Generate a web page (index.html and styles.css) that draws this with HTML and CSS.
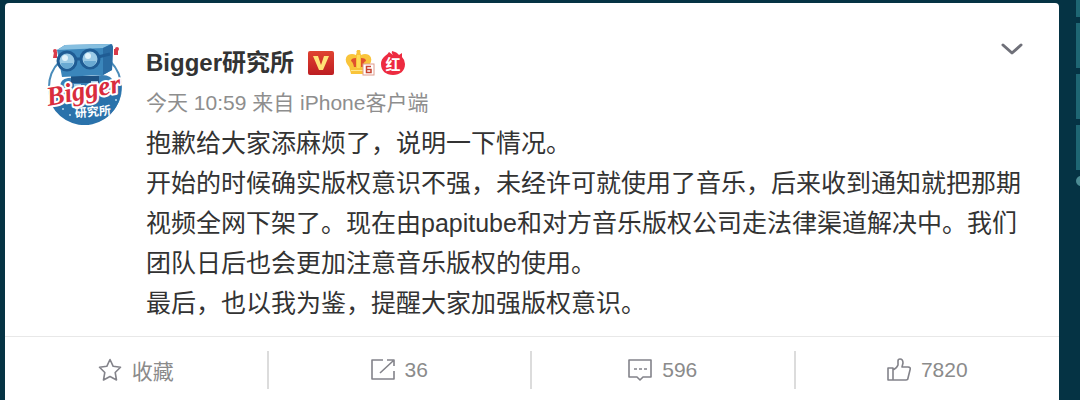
FILE: index.html
```html
<!DOCTYPE html>
<html lang="zh-CN">
<head>
<meta charset="utf-8">
<meta name="viewport" content="width=device-width, initial-scale=1">
<title>Bigger研究所</title>
<link rel="stylesheet" href="styles.css">
</head>
<body class="page">
<article class="card">
  <div class="post">
    <a class="avatar" href="#" aria-label="Bigger研究所">
      <svg class="avatar-art" viewBox="0 0 80 82" aria-hidden="true">
        <circle cx="40" cy="44" r="36" fill="#fff" stroke="#4a8cba" stroke-width="2"/>
        <path d="M4 56L76 40A37 37 0 0 1 4 56Z" fill="#2a72ab"/>
        <path d="M15 44q0-8 8-9l34-3q10 0 12 8l-4 6-48 8Z" fill="#3a80b5"/>
        <path d="M26 33h28v7H26Z" fill="#1d5283"/>
        <path d="M29 41h7v7h-7ZM46 38h7v7h-7Z" fill="#a9d2ea"/>
        <path d="M12 7L20 2 66 1 68 4 67 27 58 32 17 34Z" fill="#3b86bb"/>
        <path d="M12 7L20 2 66 1 58 5Z" fill="#86bfe0"/>
        <path d="M58 5l9-4 1 3-1 23-9 5Z" fill="#2a6ca3"/>
        <path d="M9 9h3v6H8ZM69 6h4v6h-4Z" fill="#d93b4a"/>
        <circle cx="10" cy="8" r="2" fill="#d93b4a"/><circle cx="72" cy="6" r="2" fill="#d93b4a"/>
        <circle cx="22" cy="18" r="9" fill="#9ccbe6" stroke="#1f5c94" stroke-width="3"/>
        <circle cx="45" cy="16" r="9" fill="#9ccbe6" stroke="#1f5c94" stroke-width="3"/>
        <path d="M16 20a6 6 0 0 0 12 0ZM39 18a6 6 0 0 0 12 0Z" fill="#69a9d2"/>
        <circle cx="20" cy="15" r="3" fill="#e2f3fb"/><circle cx="43" cy="13" r="3" fill="#e2f3fb"/>
        <path d="M31 16h5M53 14l12-3" stroke="#1f5c94" stroke-width="3"/>
        <g transform="rotate(-11 39 50)">
          <text class="logo-script" x="39" y="56" text-anchor="middle">Bigger</text>
        </g>
        <g transform="rotate(-5 48 70)">
          <text class="logo-name" x="48" y="73" text-anchor="middle">研究所</text>
        </g>
        <g fill="#b7d9ed"><circle cx="18" cy="66" r="1"/><circle cx="25" cy="72" r="1"/><circle cx="71" cy="57" r="1"/></g>
      </svg>
    </a>
    <div class="content">
      <header class="author">
        <h1 class="name">Bigger研究所</h1>
        <svg class="badge badge-v" viewBox="0 0 26 24" role="img" aria-label="V">
          <defs><linearGradient id="vr" x1="0" y1="0" x2="0" y2="1"><stop offset="0" stop-color="#e04331"/><stop offset="1" stop-color="#bd1d22"/></linearGradient></defs>
          <rect width="26" height="24" rx="2" fill="url(#vr)"/>
          <path d="M5 5h5l3 9 3-9h5l-6 14h-4Z" fill="#ffe277"/>
        </svg>
        <svg class="badge badge-crown" viewBox="0 0 30 26" role="img" aria-label="6">
          <path d="M5 20Q5 17 2 14-1 8 3 5q4-2 8 0 0-2 1-2a2 2 0 1 1 3 0q1 0 1 2 4-2 8 0 4 3 1 9-3 3-3 6l-1 4H6Z" fill="#f9c43a"/>
          <path d="M11 8v9H9Q8 12 6 11 6 8 11 8ZM16 8v9h2q0-5 3-6 0-3-5-3Z" fill="#e0522e"/>
          <path d="M12 5h3v13h-3Z" fill="#ffdc55"/>
          <path d="M6 20h15v1H6Z" fill="#ffe890"/>
          <rect x="18" y="14" width="11" height="11" fill="#fff" stroke="#df9c8c"/>
          <path d="M26 16.500h-4.500v6h4.500v-3h-4" fill="none" stroke="#c84331" stroke-width="1.500"/>
        </svg>
        <svg class="badge badge-red" viewBox="0 0 24 26" role="img" aria-label="红">
          <path d="M11 1q-1 2 1 4L8 2Q7 4 4 6 0 9 0 14C0 21 5 25 12 25s12-4 12-11q0-4-3-7V3l-3 2q-2-3-7-4Z" fill="#ed2b40"/>
          <text class="red-label" x="12" y="20" text-anchor="middle">红</text>
        </svg>
      </header>
      <p class="meta">今天 10:59 来自 iPhone客户端</p>
      <div class="text">
        <p>抱歉给大家添麻烦了，说明一下情况。</p>
        <p>开始的时候确实版权意识不强，未经许可就使用了音乐，后来收到通知就把那期视频全网下架了。现在由papitube和对方音乐版权公司走法律渠道解决中。我们团队日后也会更加注意音乐版权的使用。</p>
        <p>最后，也以我为鉴，提醒大家加强版权意识。</p>
      </div>
    </div>
    <button class="more" type="button" aria-label="更多">
      <svg class="chevron" viewBox="0 0 22 12" aria-hidden="true"><path d="M2 2l9 8 9-8" fill="none" stroke="#6f7079" stroke-width="3" stroke-linecap="round" stroke-linejoin="round"/></svg>
    </button>
  </div>
  <footer class="actions">
    <button class="action" type="button">
      <svg class="icon" viewBox="0 0 24 24" stroke-width="1.600" aria-hidden="true"><path d="M12 1.500l3.200 6.800 7.300 1-5.300 5.200 1.300 7.500-6.500-3.500L5.500 22l1.300-7.500L1.500 9.300l7.300-1Z"/></svg>
      收藏
    </button>
    <button class="action" type="button">
      <svg class="icon" viewBox="0 0 24 24" stroke-width="1.600" aria-hidden="true"><path d="M12 2H1v19h22v-8M9 15L22 3M16 2h7v6"/></svg>
      36
    </button>
    <button class="action" type="button">
      <svg class="icon" viewBox="0 0 24 24" stroke-width="1.600" aria-hidden="true"><path d="M1 2h22v17h-8l-3 3-3-3H1ZM6 11h3M11 11h3M16 11h3"/></svg>
      596
    </button>
    <button class="action" type="button">
      <svg class="icon" viewBox="0 0 24 24" stroke-width="1.600" aria-hidden="true"><path d="M1 10h5v12H1ZM6 12q4-2 5-5V3q0-2 2-2 3 0 3 4l-1 4h6q3 0 2 3l-2 8q0 2-2 2H6"/></svg>
      7820
    </button>
  </footer>
</article>
<div class="rail" aria-hidden="true">
  <span class="block block-first"></span><span class="block"></span><span class="block"></span><span class="block"></span><span class="dot"></span>
</div>
</body>
</html>
```
FILE: styles.css
```css
* { box-sizing: border-box; }

.page {
  margin: 0;
  min-height: 100vh;
  display: flex;
  gap: 17px;
  padding-left: 5px;
  background: #053344;
  font-family: "Liberation Sans", "Noto Sans CJK SC", sans-serif;
  color: #333;
}

.card {
  flex: 1;
  min-width: 0;
  margin-top: 3px;
  display: flex;
  flex-direction: column;
  background: #fff;
  border-radius: 4px 4px 0 0;
}

.post {
  flex: 1;
  display: flex;
  padding: 40px 36px 11px 40px;
}

.avatar { flex: none; width: 80px; height: 82px; }
.avatar-art { display: block; width: 80px; height: 82px; overflow: visible; }
.logo-script {
  font: italic bold 27px "Liberation Serif", serif;
  fill: #d92c3d;
  stroke: #fff;
  stroke-width: 4px;
  stroke-linejoin: round;
  paint-order: stroke;
}
.logo-name { font: bold 12px "Noto Sans CJK SC", sans-serif; fill: #fff; }

.content { flex: 1; min-width: 0; margin-left: 21px; }

.author { display: flex; align-items: center; height: 40px; }
.name { margin: 0 14px 0 0; font-size: 24px; line-height: 40px; font-weight: bold; }
.badge { flex: none; display: block; }
.badge-v { width: 26px; height: 24px; }
.badge-crown { width: 30px; height: 26px; margin: 0 6px 0 11px; }
.badge-red { width: 24px; height: 26px; }
.red-label { font: bold 15px "Noto Sans CJK SC", sans-serif; fill: #fff; }

.meta { margin: 0; font-size: 21px; line-height: 40px; color: #8e8e8e; }

.text { margin-right: -24px; font-size: 25px; line-height: 40px; }
.text p { margin: 0; }

.more {
  flex: none;
  align-self: flex-start;
  display: flex;
  padding: 0;
  border: 0;
  background: none;
}
.chevron { width: 22px; height: 12px; }

.actions {
  display: grid;
  grid-template-columns: repeat(4, 1fr);
  border-top: 1px solid #e8e8e8;
  padding: 14px 0 11px;
}
.action {
  display: flex;
  align-items: center;
  justify-content: center;
  gap: 10px;
  height: 38px;
  padding: 0;
  border: 0;
  background: none;
  font-family: inherit;
  font-size: 21px;
  color: #8b8b8b;
}
.action:not(:last-child) { border-right: 2px solid #dcdcdc; }
.icon {
  width: 24px;
  height: 24px;
  fill: none;
  stroke: #83838a;
  stroke-linejoin: round;
}

.rail {
  flex: none;
  width: 4px;
  display: flex;
  flex-direction: column;
  gap: 6px;
  overflow: hidden;
}
.block { height: 45px; background: #1e6673; }
.block-first { height: 17px; }
.dot { width: 10px; height: 10px; border-radius: 50%; background: #4c8c94; }
```
